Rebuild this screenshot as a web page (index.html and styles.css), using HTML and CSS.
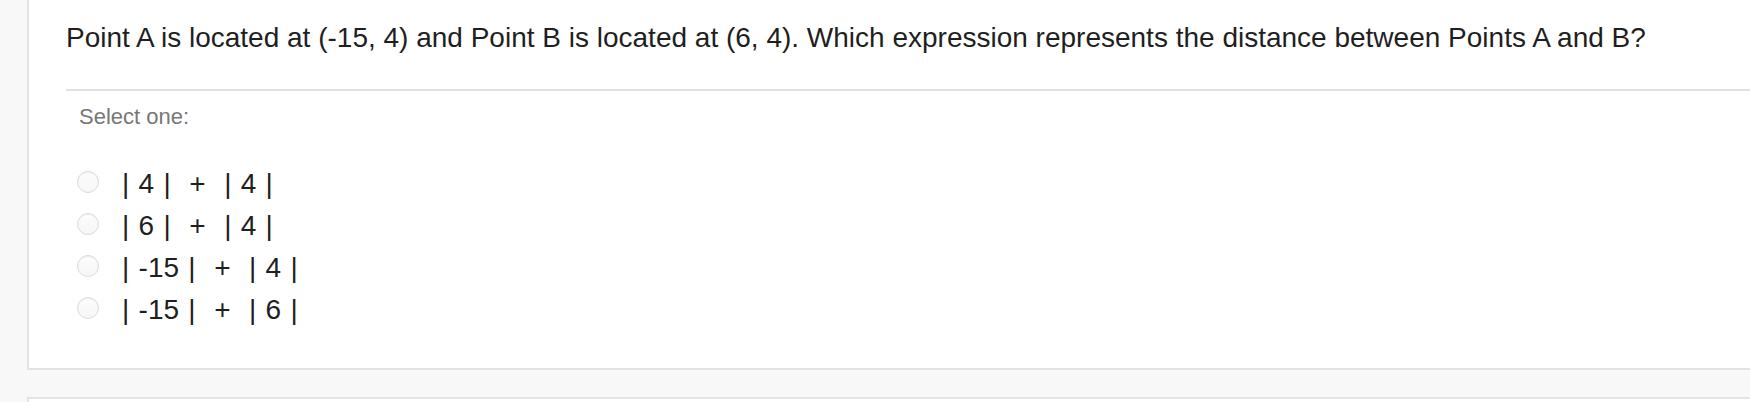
FILE: index.html
```html
<!DOCTYPE html>
<html lang="en">
<head>
<meta charset="utf-8">
<title>Question</title>
<link rel="stylesheet" href="styles.css">
</head>
<body>
<div class="page">
  <div class="panel">
    <div class="qtext">Point A is located at (-15, 4) and Point B is located at (6, 4). Which expression represents the distance between Points A and B?</div>
    <div class="answers">
      <div class="prompt">Select one:</div>
      <div class="options">
        <label class="option"><span class="radio"></span><span class="label">| 4 |  +  | 4 |</span></label>
        <label class="option"><span class="radio"></span><span class="label">| 6 |  +  | 4 |</span></label>
        <label class="option"><span class="radio"></span><span class="label">| -15 |  +  | 4 |</span></label>
        <label class="option"><span class="radio"></span><span class="label">| -15 |  +  | 6 |</span></label>
      </div>
    </div>
  </div>
  <div class="panel next"></div>
</div>
</body>
</html>
```

FILE: styles.css
```css
html, body {
  margin: 0;
  padding: 0;
}
body {
  background: #f8f8f8;
  font-family: "Liberation Sans", Arial, Helvetica, sans-serif;
  color: #222;
  overflow: hidden;
}
.page {
  padding-left: 27px;
  display: flex;
  flex-direction: column;
  gap: 27px;
}
.panel {
  background: #fff;
  border-left: 2px solid #e3e3e3;
  border-bottom: 2px solid #e3e3e3;
  margin-right: -40px;
  padding: 22px 0 37px 37px;
}
.panel.next {
  border-top: 2px solid #e3e3e3;
  border-bottom: none;
  height: 40px;
  padding: 0;
}
.qtext {
  font-size: 28px;
  line-height: 32px;
  color: #1f1f1f;
  padding-bottom: 35px;
  border-bottom: 2px solid #dee2e6;
}
.answers {
  padding-top: 13px;
  padding-left: 13px;
}
.prompt {
  font-size: 22px;
  line-height: 26px;
  color: #777;
  margin-bottom: 33px;
}
.options {
  display: flex;
  flex-direction: column;
  margin-left: -2px;
}
.option {
  display: flex;
  align-items: flex-start;
  height: 42px;
}
.radio {
  width: 20px;
  height: 20px;
  margin-top: 8px;
  border: 1px solid #dcdcdc;
  border-radius: 50%;
  background: linear-gradient(#fdfdfd, #f6f6f6);
  box-shadow: inset 0 1px 1px rgba(0, 0, 0, 0.06);
  flex: none;
}
.label {
  margin-left: 23px;
  font-size: 28px;
  line-height: 42px;
  white-space: pre;
  word-spacing: 1.5px;
  color: #1f1f1f;
}
```
